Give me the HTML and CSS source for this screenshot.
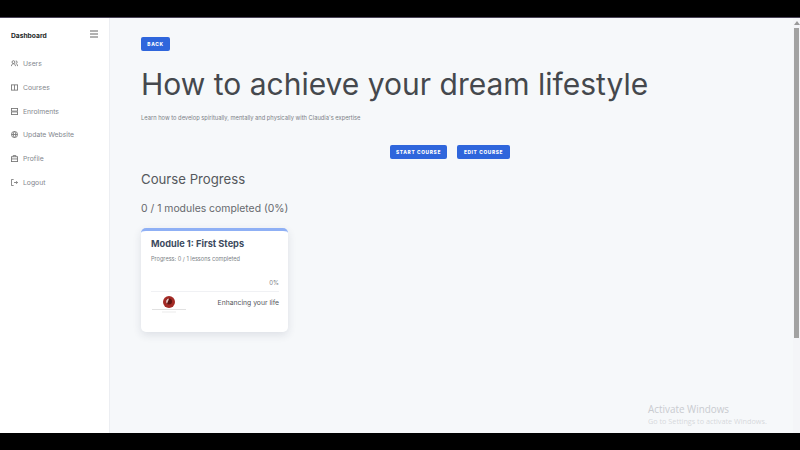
FILE: index.html
```html
<!DOCTYPE html>
<html>
<head>
    <link rel="stylesheet" href="styles.css">
</head>
<body>
<div class="bar-top"></div>
<div class="app">
    <div class="sidebar">
        <div class="side-head">
            <span class="brand">Dashboard</span>
            <svg class="burger" width="9" height="8" viewBox="0 0 9 8"><path d="M0 1h8M0 4h8M0 7h8" stroke="#666" stroke-width="1"/></svg>
        </div>
        <a class="nav-item">
            <svg width="7" height="7" viewBox="0 0 8 8" fill="none" stroke="#777"><circle cx="2.8" cy="2.4" r="1.6"/><path d="M.5 7c0-1.800 1-2.700 2.300-2.700S5.100 5.200 5.100 7M5.500 1a1.500 1.500 0 0 1 0 3M6.300 4.500c.8.5 1.200 1.300 1.200 2.500"/></svg>
            Users
        </a>
        <a class="nav-item">
            <svg width="7" height="7" viewBox="0 0 8 8" fill="none" stroke="#777"><rect x=".5" y="1" width="7" height="6"/><path d="M4 1v6"/></svg>
            Courses
        </a>
        <a class="nav-item">
            <svg width="7" height="7" viewBox="0 0 8 8" fill="none" stroke="#777"><rect x=".5" y=".5" width="7" height="3"/><rect x=".5" y="4.500" width="7" height="3"/></svg>
            Enrolments
        </a>
        <a class="nav-item">
            <svg width="7" height="7" viewBox="0 0 8 8" fill="none" stroke="#777"><circle cx="4" cy="4" r="3.500"/><path d="M.5 4h7M4 .5c-2 2-2 5 0 7M4 .5c2 2 2 5 0 7"/></svg>
            Update Website
        </a>
        <a class="nav-item">
            <svg width="7" height="7" viewBox="0 0 8 8" fill="none" stroke="#777"><rect x=".5" y="2" width="7" height="5.500"/><path d="M2.500 2V.5h3V2M.5 4.500h7"/></svg>
            Profile
        </a>
        <a class="nav-item">
            <svg width="7" height="7" viewBox="0 0 8 8" fill="none" stroke="#777"><path d="M3 .5H.5v7H3M3.500 4h4M6 2.500 7.500 4 6 5.500"/></svg>
            Logout
        </a>
    </div>
    <div class="main">
        <div class="content">
            <div class="back-row">
                <button class="btn btn-back">Back</button>
            </div>
            <h1>How to achieve your dream lifestyle</h1>
            <p class="lead">Learn how to develop spiritually, mentally and physically with Claudia's expertise</p>
            <div class="actions">
                <button class="btn btn-start">Start course</button>
                <button class="btn btn-edit">Edit course</button>
            </div>
            <h2>Course Progress</h2>
            <h3>0 / 1 modules completed (0%)</h3>
            <div class="card">
                <h4>Module 1: First Steps</h4>
                <p class="lessons">Progress: 0 / 1 lessons completed</p>
                <div class="percent">0%</div>
                <div class="lesson">
                    <div class="thumb">
                        <svg width="36" height="22" viewBox="0 0 36 22">
                            <circle cx="18" cy="8" r="6" fill="#a32a25"/>
                            <circle cx="18" cy="7.500" r="3" fill="#5e1512"/>
                            <path d="M18 4.500a3 3 0 0 0-2 5.200c.5-1.700 1.500-3 2-5.200z" fill="#e8c8c6"/>
                            <path d="M1 15.500h34" stroke="#ccc" stroke-width=".6"/>
                            <path d="M11 18h14" stroke="#ddd" stroke-width=".6"/>
                        </svg>
                    </div>
                    <span class="lesson-name">Enhancing your life</span>
                </div>
            </div>
        </div>
        <div class="watermark">
            <div class="wm-big">Activate Windows</div>
            <div class="wm-small">Go to Settings to activate Windows.</div>
        </div>
    </div>
    <div class="scrollbar">
        <div class="arrow"></div>
        <div class="thumb-bar"></div>
    </div>
</div>
<div class="bar-bottom"></div>
</body>
</html>
```

FILE: styles.css
```css
*{
    box-sizing:border-box;
    font-family:Inter, 'Open Sans', sans-serif;
}
html,body{
    margin:0;
    height:450px;
    overflow:hidden;
    background:#000;
}
.bar-top{
    height:18px;
    background:#000;
    border-bottom:1px solid #4a4458;
}
.bar-bottom{
    height:17px;
    background:#000;
}
.app{
    display:flex;
    height:415px;
    background:#f6f8fa;
}
.sidebar{
    width:110px;
    background:#fff;
    border-right:1px solid #eceef2;
    padding:0 11px;
    flex-shrink:0;
}
.side-head{
    display:flex;
    justify-content:space-between;
    align-items:center;
    height:33px;
    margin-bottom:.6px;
}
.brand{
    font-size:6.7px;
    font-weight:700;
    color:#1c1f26;
    padding-top:3px;
}
.burger{
    margin-right:-1px;
    margin-bottom:2px;
}
.nav-item{
    display:flex;
    align-items:center;
    gap:5px;
    height:23.8px;
    font-size:6.8px;
    color:#83878e;
}
.main{
    flex:1;
    position:relative;
}
.content{
    padding:19px 31px;
}
.back-row{
    display:flex;
}
.btn{
    background:#2f66dc;
    color:#fff;
    border:none;
    border-radius:2px;
    height:14px;
    padding:0;
    font-size:4.8px;
    font-weight:800;
    letter-spacing:.65px;
    text-transform:uppercase;
}
.btn-back{
    width:29px;
}
.btn-start{
    width:57px;
}
.btn-edit{
    width:53px;
}
h1{
    margin:14px 0 0;
    font-size:30px;
    line-height:38px;
    font-weight:400;
    color:#45484d;
}
.lead{
    margin:11px 0 0;
    font-size:5.75px;
    line-height:8px;
    color:#7b7f86;
}
.actions{
    display:flex;
    justify-content:center;
    gap:10px;
    margin-top:23px;
    padding-right:3px;
}
h2{
    margin:12px 0 0;
    font-size:13.2px;
    line-height:17px;
    font-weight:400;
    color:#55585d;
}
h3{
    margin:14px 0 0;
    font-size:10.4px;
    line-height:13px;
    font-weight:400;
    color:#66696e;
}
.card{
    width:147px;
    height:104px;
    margin-top:13px;
    background:#fff;
    border-top:3px solid #8fb0f5;
    border-radius:5px;
    padding:7px 9px 7px 10px;
    box-shadow:0 3px 9px rgba(40,50,80,.12);
}
h4{
    margin:0;
    font-size:9.2px;
    line-height:12px;
    font-weight:700;
    color:#3c4a5e;
}
.lessons{
    margin:5px 0 0;
    font-size:5.6px;
    line-height:8px;
    color:#7b7f86;
}
.percent{
    margin-top:16px;
    text-align:right;
    font-size:6px;
    line-height:8px;
    color:#7b7f86;
}
.lesson{
    display:flex;
    justify-content:space-between;
    align-items:center;
    margin-top:4px;
    padding-top:2px;
    border-top:1px solid #f0f1f4;
}
.thumb{
    display:flex;
    height:22px;
    align-items:center;
}
.lesson-name{
    font-size:6.8px;
    color:#55585d;
    margin-bottom:5px;
}
.watermark{
    position:absolute;
    left:538px;
    top:384px;
    color:#c9cbd0;
}
.wm-big{
    font-family:'Open Sans', sans-serif;
    font-size:9.9px;
    line-height:14px;
}
.wm-small{
    font-family:'Open Sans', sans-serif;
    font-size:7.25px;
    line-height:11px;
    color:#d6d8dc;
}
.scrollbar{
    width:7px;
    flex-shrink:0;
    background:#f4f5f8;
    padding-top:3px;
}
.arrow{
    width:0;
    margin:0 auto;
    border-left:3px solid transparent;
    border-right:3px solid transparent;
    border-bottom:4px solid #9a9a9a;
}
.thumb-bar{
    width:5px;
    height:310px;
    margin:3px auto 0;
    background:#a2a2a2;
}
```
